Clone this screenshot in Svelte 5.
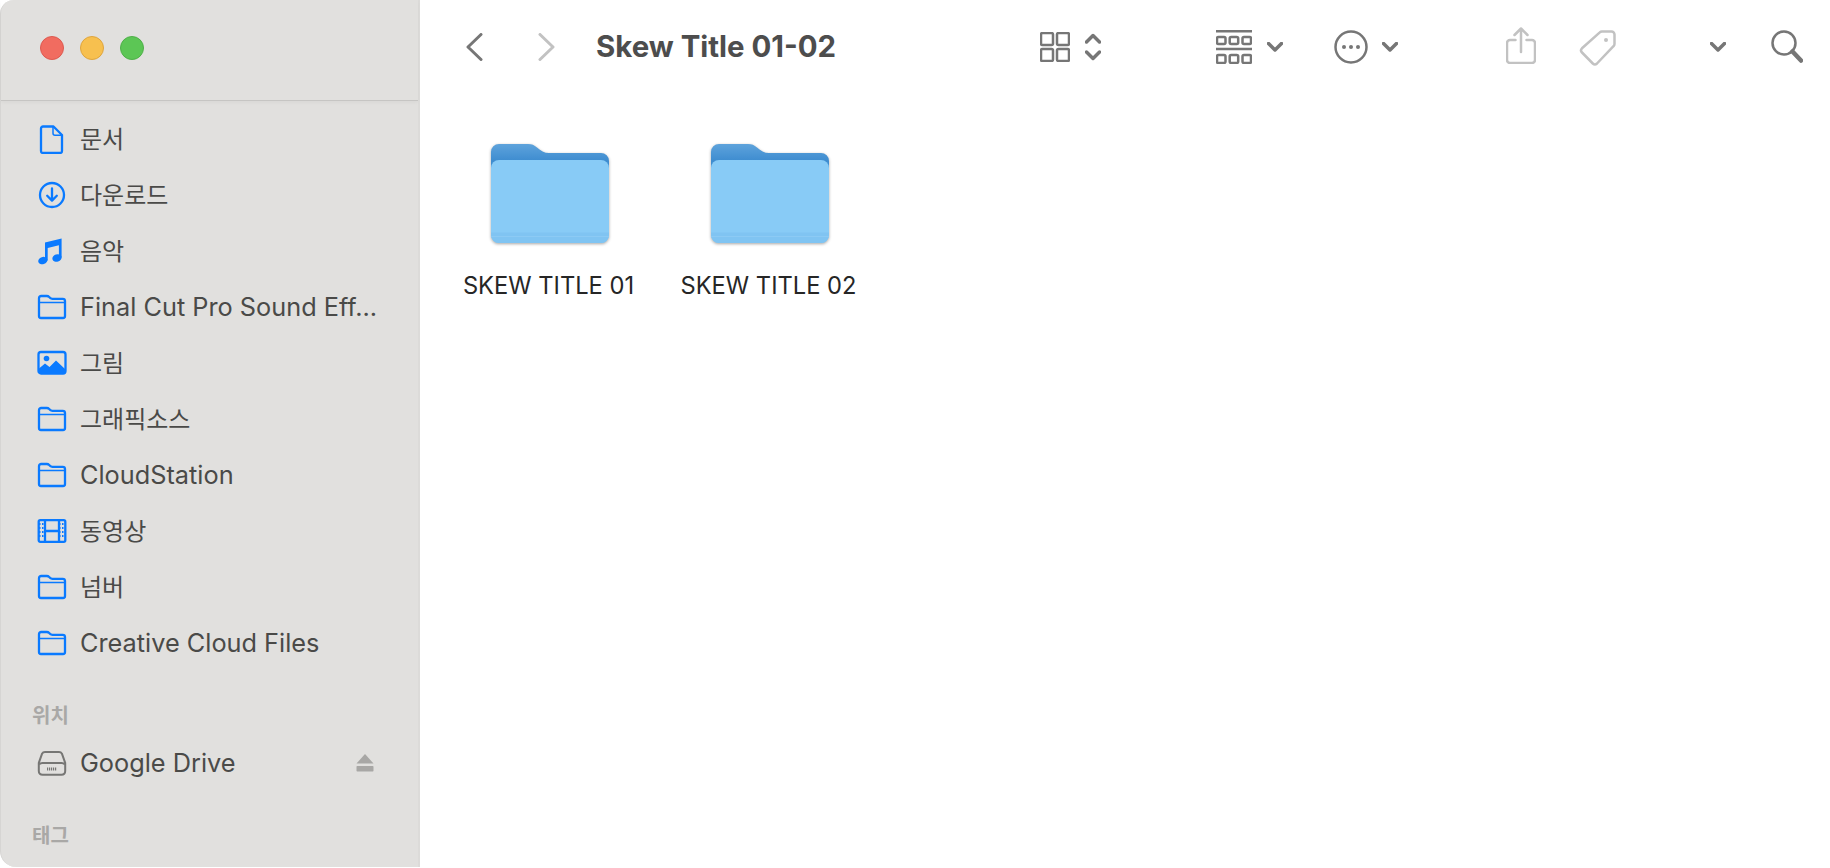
<script>
	const places = [
		{ name: '문서', icon: 'doc', ko: true },
		{ name: '다운로드', icon: 'download', ko: true },
		{ name: '음악', icon: 'music', ko: true },
		{ name: 'Final Cut Pro Sound Eff...', icon: 'folder' },
		{ name: '그림', icon: 'photo', ko: true },
		{ name: '그래픽소스', icon: 'folder', ko: true },
		{ name: 'CloudStation', icon: 'folder' },
		{ name: '동영상', icon: 'film', ko: true },
		{ name: '넘버', icon: 'folder', ko: true },
		{ name: 'Creative Cloud Files', icon: 'folder' }
	];
	const files = ['SKEW TITLE 01', 'SKEW TITLE 02'];
</script>

{#snippet chevron(cls)}
	<svg class="chev {cls}" width="16" height="10" viewBox="0 0 16 10"><path d="M1.5 1.5 8 8l6.5-6.5" /></svg>
{/snippet}

<div class="window">
	<aside class="sidebar">
		<div class="titlebar">
			<span class="light red"></span>
			<span class="light yellow"></span>
			<span class="light green"></span>
		</div>
		<nav class="list">
			{#each places as item}
				<div class="row">
					<svg class="ico" width="30" height="30" viewBox="0 0 30 30">
						{#if item.icon === 'doc'}
							<path class="line" d="M6 2.500h10.500L25 11v16a2 2 0 0 1-2 2H6a2 2 0 0 1-2-2V4.500a2 2 0 0 1 2-2Z" />
							<path class="thin" d="M16 2.800v6.400a2 2 0 0 0 2 2h6.800" />
						{:else if item.icon === 'download'}
							<circle class="line" cx="15" cy="15" r="12" />
							<path class="line" d="M15 8.500v12M10.200 15.800 15 20.600l4.800-4.800" />
						{:else if item.icon === 'music'}
							<g transform="translate(-1 -1)">
								<path class="fill" d="M9 7.600 25.600 3.600V22.400h-2.700V10.200L11.700 12.900V25.400h-2.700Z" />
								<ellipse class="fill" cx="6.800" cy="25.600" rx="4.700" ry="3.600" transform="rotate(-18 6.800 25.600)" />
								<ellipse class="fill" cx="21" cy="23" rx="4.700" ry="3.600" transform="rotate(-18 21 23)" />
							</g>
						{:else if item.icon === 'folder'}
							<path class="line" d="M2 8.500V6.200A2.200 2.200 0 0 1 4.200 4h5.600c1.100 0 1.700.3 2.400 1l1 1c.6.600 1.200.8 2.200.8h10.400A2.200 2.200 0 0 1 28 9v15a2 2 0 0 1-2 2H4a2 2 0 0 1-2-2Z" />
							<path class="thin" d="M2 10.500h26" />
						{:else if item.icon === 'photo'}
							<rect class="line" x="1.500" y="4" width="27" height="21.500" rx="2.500" />
							<circle class="fill" cx="9.500" cy="10.500" r="2.800" />
							<path class="fill" d="M2 24v-3.500l6-5 4.500 3.500 6.500-6.500 9 8.500v3l-1.500 1.500H3.500Z" />
						{:else if item.icon === 'film'}
							<rect class="line" x="1.700" y="4.200" width="26.600" height="21.600" rx="1.500" />
							<path class="line" d="M8 4.200v21.600M22 4.200v21.600M8 15h14" />
							<path class="dots" d="M2 8h6M2 12h6M2 16h6M2 20h6M22 8h6M22 12h6M22 16h6M22 20h6" />
						{/if}
					</svg>
					<span class="label" class:ko={item.ko}>{item.name}</span>
				</div>
			{/each}
		</nav>
		<div class="heading">위치</div>
		<div class="row">
			<svg class="ico" width="30" height="30" viewBox="0 0 30 30">
				<path class="drive" d="M8 4h14c1.500 0 2.300.6 3 1.800l3.200 9V23c0 2.400-1.400 3.800-3.800 3.800H5.600c-2.400 0-3.800-1.400-3.800-3.800v-8.200L5 5.800C5.700 4.600 6.500 4 8 4Z" />
				<path class="drive" d="M2.200 16.500c.8-1 1.800-1.500 3.200-1.500h19.200c1.400 0 2.400.5 3.200 1.500" />
				<path class="grille" d="M10 21h10" />
			</svg>
			<span class="label">Google Drive</span>
			<svg class="eject" width="18" height="18" viewBox="0 0 18 18"><path d="M9 0 17.500 9.500H.5Z" /><rect x=".5" y="12" width="17" height="5.500" rx=".8" /></svg>
		</div>
		<div class="heading">태그</div>
	</aside>

	<main class="content">
		<header class="toolbar">
			<svg class="nav" width="18" height="28" viewBox="0 0 18 28"><path class="dark" d="M16 1.500 3 14l13 12.500" /></svg>
			<svg class="nav forward" width="18" height="28" viewBox="0 0 18 28"><path class="muted" d="M2 1.500 15 14 2 26.500" /></svg>
			<h1 class="title">Skew Title 01-02</h1>

			<div class="tool view">
				<svg width="30" height="30" viewBox="0 0 30 30">
					<g class="dark thin-s">
						<rect x="1" y="1" width="12" height="12" rx="1.500" />
						<rect x="17" y="1" width="12" height="12" rx="1.500" />
						<rect x="1" y="17" width="12" height="12" rx="1.500" />
						<rect x="17" y="17" width="12" height="12" rx="1.500" />
					</g>
				</svg>
				<svg width="16" height="28" viewBox="0 0 16 28"><path class="dark bold" d="M1.500 9 8 2.500 14.500 9M1.500 19 8 25.500 14.500 19" /></svg>
			</div>

			<div class="tool group">
				<svg width="36" height="34" viewBox="0 0 36 34">
					<g class="dark thin-s">
						<path d="M0 1.200h36M0 19h36" />
						<rect x="1" y="7" width="8.500" height="7" rx="1.500" />
						<rect x="13.700" y="7" width="8.500" height="7" rx="1.500" />
						<rect x="26.500" y="7" width="8.500" height="7" rx="1.500" />
						<rect x="1" y="25" width="8.500" height="8" rx="1.500" />
						<rect x="13.700" y="25" width="8.500" height="8" rx="1.500" />
						<rect x="26.500" y="25" width="8.500" height="8" rx="1.500" />
					</g>
				</svg>
				{@render chevron('')}
			</div>

			<div class="tool more">
				<svg width="34" height="34" viewBox="0 0 34 34">
					<circle class="dark thin-s" cx="17" cy="17" r="15.500" />
					<circle class="dotfill" cx="10" cy="17" r="2" />
					<circle class="dotfill" cx="17" cy="17" r="2" />
					<circle class="dotfill" cx="24" cy="17" r="2" />
				</svg>
				{@render chevron('')}
			</div>

			<svg class="share" width="30" height="37" viewBox="0 0 30 37">
				<path class="muted thin-s" d="M9.500 13H4a3 3 0 0 0-3 3v17a3 3 0 0 0 3 3h22a3 3 0 0 0 3-3V16a3 3 0 0 0-3-3h-5.500M15 25V2M8.500 8 15 1.500 21.500 8" />
			</svg>
			<svg class="tag" width="38" height="38" viewBox="0 0 38 38">
				<path class="muted thin-s" d="M23 2.500h9.500a3 3 0 0 1 3 3V15a3 3 0 0 1-1 2.200L18 34.500a3 3 0 0 1-4.200 0L3 23.500a3 3 0 0 1 0-4.200L20.800 3.400A3 3 0 0 1 23 2.500Z" />
				<circle class="tagdot" cx="27" cy="11" r="2" />
			</svg>
			{@render chevron('solo')}
			<svg class="search" width="32" height="33" viewBox="0 0 32 33">
				<circle class="dark thin-s" cx="13" cy="13" r="11.500" />
				<path class="dark handle" d="M21.500 21.500 30 30.500" />
			</svg>
		</header>

		<section class="grid">
			{#each files as file}
				<div class="cell">
					<svg class="big" width="120" height="102" viewBox="0 0 120 102">
						<defs>
							<linearGradient id="tab-{file.slice(-1)}" x1="0" y1="0" x2="0" y2="1">
								<stop offset="0" stop-color="#5ea3dc" />
								<stop offset="0.18" stop-color="#3f8dd0" />
							</linearGradient>
						</defs>
						<path fill="url(#tab-{file.slice(-1)})" d="M1 92V9a8 8 0 0 1 8-8h29c4 0 6 1 9 3.500 4 3.500 7 5.500 12 5.500h52a8 8 0 0 1 8 8v74Z" />
						<path class="front" d="M1 92V25a8 8 0 0 1 8-8h102a8 8 0 0 1 8 8v67a8 8 0 0 1-8 8H9a8 8 0 0 1-8-8Z" />
						<path class="stripe" d="M1 89.500h118V92a8 8 0 0 1-8 8H9a8 8 0 0 1-8-8Z" />
						<path class="seam" d="M1 93.500h118" />
					</svg>
					<span class="name">{file}</span>
				</div>
			{/each}
		</section>
	</main>
</div>

<style>
	:global(body) {
		margin: 0;
		background: #fff;
	}
	.window {
		display: flex;
		width: 1830px;
		height: 868px;
		overflow: hidden;
		font-family: Inter, "Noto Sans CJK KR", sans-serif;
	}
	.sidebar {
		box-sizing: border-box;
		width: 420px;
		height: 867px;
		flex: none;
		background: #e1e0de;
		border-right: 2px solid #dcdbd9;
		border-left: 1px solid #d6d5d3;
		border-radius: 14px 0 0 16px;
	}
	.titlebar {
		box-sizing: border-box;
		height: 101px;
		display: flex;
		align-items: flex-start;
		gap: 16px;
		padding: 36px 0 0 39px;
		border-bottom: 1px solid #c6c5c3;
		box-shadow: 0 2px 3px rgba(0, 0, 0, 0.03);
	}
	.light {
		box-sizing: border-box;
		width: 24px;
		height: 24px;
		border-radius: 50%;
		border: 1px solid;
	}
	.red {
		background: #f16c60;
		border-color: #dd5a50;
	}
	.yellow {
		background: #f7c04f;
		border-color: #dfa53e;
	}
	.green {
		background: #5cc655;
		border-color: #4fb049;
	}
	.list {
		padding-top: 10px;
	}
	.row {
		height: 56px;
		display: flex;
		align-items: center;
		padding: 0 36px;
		gap: 13px;
		font-size: 25.300px;
		color: #4a4a48;
	}
	.ico {
		flex: none;
	}
	.label {
		flex: 1;
		min-width: 0;
		white-space: nowrap;
		padding-bottom: 2px;
	}
	.ko {
		font-size: 24px;
		padding-bottom: 3px;
	}
	.line,
	.thin,
	.dots {
		fill: none;
		stroke: #0a7aff;
		stroke-width: 2.300;
		stroke-linecap: round;
		stroke-linejoin: round;
	}
	.thin {
		stroke-width: 1.500;
	}
	.dots {
		stroke-width: 2;
		stroke-linecap: butt;
		stroke-dasharray: 1.500 1.500;
	}
	.fill {
		fill: #0a7aff;
	}
	.drive {
		fill: none;
		stroke: #767674;
		stroke-width: 2;
		stroke-linejoin: round;
	}
	.grille {
		fill: none;
		stroke: #767674;
		stroke-width: 3;
		stroke-dasharray: 1.200 0.800;
	}
	.eject {
		flex: none;
		margin-right: 8px;
		fill: #a8a7a5;
	}
	.heading {
		height: 30px;
		line-height: 30px;
		margin: 30px 0 4px 31px;
		font-size: 20px;
		font-weight: 700;
		color: #a9a8a6;
	}
	.row + .heading {
		margin-bottom: 0;
	}
	.content {
		flex: 1;
		min-width: 0;
		background: #fff;
	}
	.toolbar {
		height: 93px;
		display: flex;
		align-items: center;
		padding-left: 45px;
	}
	.nav {
		flex: none;
	}
	.forward {
		margin-left: 55px;
	}
	.dark,
	.muted {
		fill: none;
		stroke: #767676;
		stroke-width: 3;
		stroke-linecap: round;
		stroke-linejoin: round;
	}
	.muted {
		stroke: #c2c2c2;
	}
	.thin-s {
		fill: none;
		stroke-width: 2.500;
	}
	.bold {
		stroke-width: 3.500;
	}
	.handle {
		stroke-width: 4.500;
	}
	.dotfill {
		fill: #767676;
	}
	.tagdot {
		fill: #c2c2c2;
	}
	.title {
		margin: 0 0 0 40px;
		width: 444px;
		flex: none;
		font-size: 29.400px;
		font-weight: 700;
		line-height: 40px;
		color: #4d4d4d;
		white-space: nowrap;
	}
	.tool {
		display: flex;
		align-items: center;
		flex: none;
		gap: 15px;
	}
	.group {
		margin-left: 115px;
	}
	.more {
		margin-left: 51px;
		gap: 14px;
	}
	.chev {
		flex: none;
		fill: none;
		stroke: #767676;
		stroke-width: 3.500;
		stroke-linecap: round;
		stroke-linejoin: round;
	}
	.share {
		flex: none;
		margin-left: 108px;
		margin-top: -2px;
	}
	.tag {
		flex: none;
		margin-left: 43px;
		margin-top: 2px;
	}
	.chev:global(.solo) {
		margin-left: 93px;
	}
	.search {
		flex: none;
		margin-left: 45px;
	}
	.grid {
		display: flex;
		padding: 50px 0 0 20px;
	}
	.cell {
		width: 220px;
		display: flex;
		flex-direction: column;
		align-items: center;
	}
	.big {
		filter: drop-shadow(0 1.500px 1.500px rgba(0, 0, 0, 0.35));
	}
	.front {
		fill: #88cbf6;
	}
	.stripe {
		fill: #80c4f2;
	}
	.seam {
		fill: none;
		stroke: #8ccaf4;
		stroke-width: 1;
	}
	.name {
		margin: 26px 3px 0 0;
		font-size: 23.700px;
		line-height: 30px;
		color: #262626;
		white-space: nowrap;
	}
</style>
